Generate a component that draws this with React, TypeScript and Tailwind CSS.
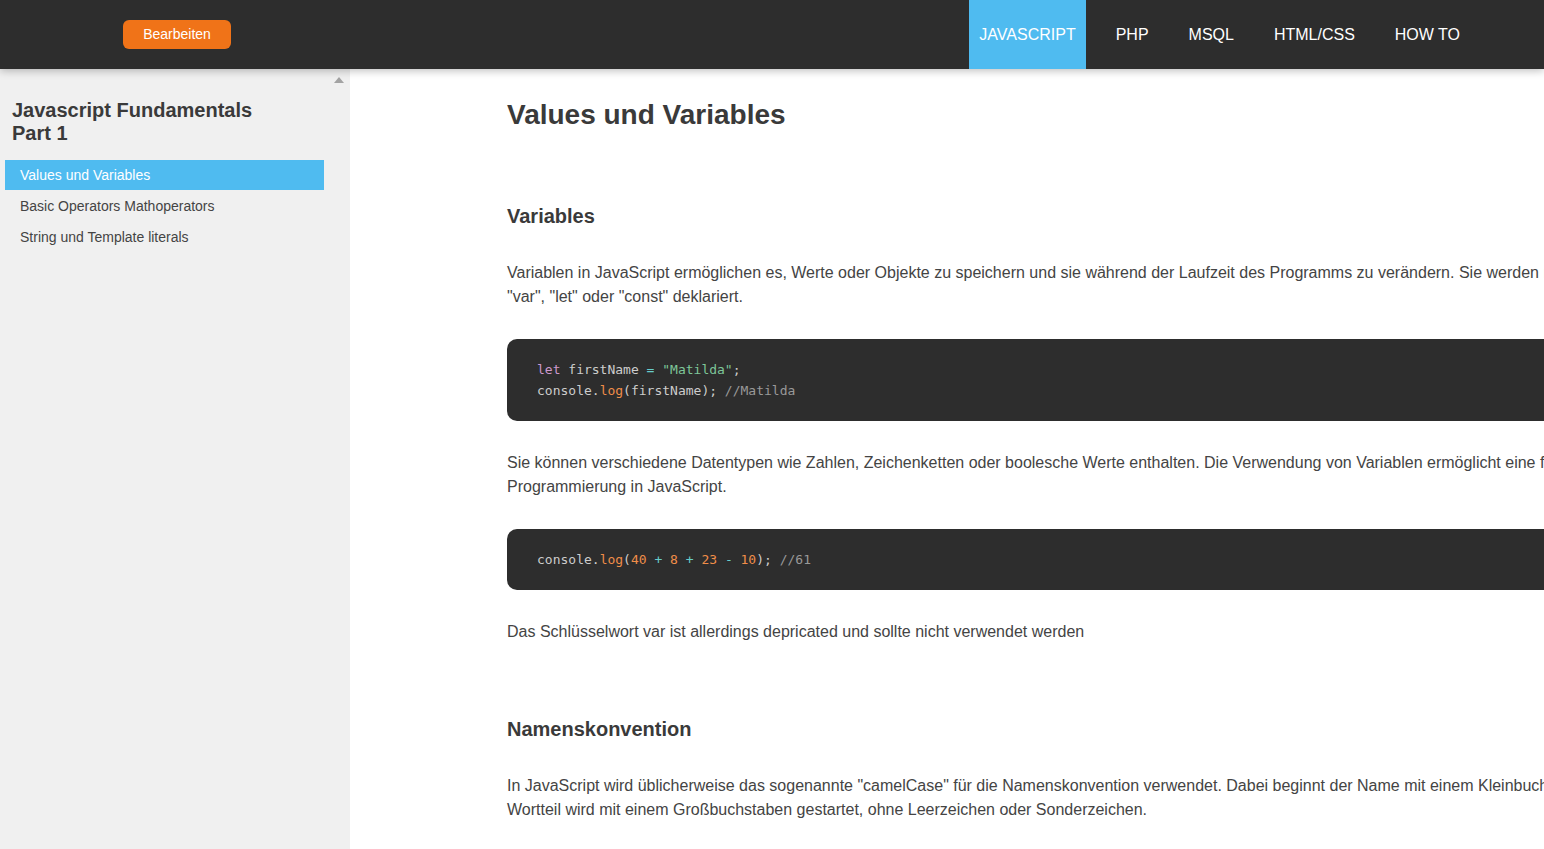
export default function App() {
  const navItems = ["JAVASCRIPT", "PHP", "MSQL", "HTML/CSS", "HOW TO"];
  const lessons = [
    "Values und Variables",
    "Basic Operators Mathoperators",
    "String und Template literals",
  ];

  return (
    <div className="w-[1544px] h-[849px] overflow-hidden flex flex-col bg-white font-['Liberation_Sans',Arial,sans-serif]">
      {/* top bar */}
      <header className="relative z-10 h-[69px] shrink-0 bg-[#2d2d2d] flex items-center justify-between pl-[123px] pr-[74px] shadow-[0_2px_8px_rgba(0,0,0,0.25)]">
        <button className="h-[29px] w-[108px] rounded-md bg-[#f07318] text-white text-[14px]">
          Bearbeiten
        </button>
        <nav className="flex h-full gap-5">
          {navItems.map((item, i) => (
            <a
              key={item}
              className={`h-full flex items-center px-[10px] text-[16px] text-white ${
                i === 0 ? "bg-[#4fbbf0]" : ""
              }`}
            >
              {item}
            </a>
          ))}
        </nav>
      </header>

      <div className="flex flex-1 min-h-0">
        {/* sidebar */}
        <aside className="relative w-[350px] shrink-0 bg-[#f0f0f0] pt-[30px]">
          <span className="absolute right-[6px] top-[8px] w-0 h-0 border-x-[5px] border-x-transparent border-b-[6px] border-b-[#a3a3a3]" />
          <h3 className="w-[280px] pl-3 text-[20px] leading-[23px] font-bold text-[#3a3a3a]">
            Javascript Fundamentals Part 1
          </h3>
          <ul className="mt-[15px] w-[319px] ml-[5px]">
            {lessons.map((l, i) => (
              <li
                key={l}
                className={`pl-[15px] flex items-center text-[14px] ${
                  i === 0 ? "bg-[#4fbbf0] text-white h-[30px]" : "text-[#444] h-[31px] pt-px"
                }`}
              >
                {l}
              </li>
            ))}
          </ul>
        </aside>

        {/* content */}
        <main className="flex-1 pl-[157px] pt-[29px]">
          <div className="w-[1230px] text-[#444] text-[16px] leading-6">
            <h1 className="text-[28px] leading-[34px] font-bold text-[#3a3a3a]">
              Values und Variables
            </h1>

            <h2 className="mt-[72px] text-[20px] leading-6 font-bold text-[#3a3a3a]">
              Variables
            </h2>
            <p className="mt-[33px]">
              Variablen in JavaScript ermöglichen es, Werte oder Objekte zu speichern und sie während der Laufzeit des Programms zu verändern. Sie werden mit den Schlüsselwörtern "var", "let" oder "const" deklariert.
            </p>

            <pre className="mt-[30px] rounded-[10px] bg-[#2d2d2d] px-[30px] py-5 text-[13px] leading-[21px] text-[#ccc] font-['DejaVu_Sans_Mono',monospace]">
              <span className="text-[#cc99cd]">let</span> firstName{" "}
              <span className="text-[#67cdcc]">=</span>{" "}
              <span className="text-[#7ec699]">"Matilda"</span>;{"\n"}
              console.<span className="text-[#f08d49]">log</span>(firstName);{" "}
              <span className="text-[#999]">//Matilda</span>
            </pre>

            <p className="mt-[30px]">
              Sie können verschiedene Datentypen wie Zahlen, Zeichenketten oder boolesche Werte enthalten. Die Verwendung von Variablen ermöglicht eine flexible und dynamische Programmierung in JavaScript.
            </p>

            <pre className="mt-[30px] rounded-[10px] bg-[#2d2d2d] px-[30px] py-5 text-[13px] leading-[21px] text-[#ccc] font-['DejaVu_Sans_Mono',monospace]">
              console.<span className="text-[#f08d49]">log</span>(
              <span className="text-[#f08d49]">40</span>{" "}
              <span className="text-[#67cdcc]">+</span>{" "}
              <span className="text-[#f08d49]">8</span>{" "}
              <span className="text-[#67cdcc]">+</span>{" "}
              <span className="text-[#f08d49]">23</span>{" "}
              <span className="text-[#67cdcc]">-</span>{" "}
              <span className="text-[#f08d49]">10</span>);{" "}
              <span className="text-[#999]">//61</span>
            </pre>

            <p className="mt-[30px]">
              Das Schlüsselwort var ist allerdings depricated und sollte nicht verwendet werden
            </p>

            <h2 className="mt-[73px] text-[20px] leading-6 font-bold text-[#3a3a3a]">
              Namenskonvention
            </h2>
            <p className="mt-[33px]">
              In JavaScript wird üblicherweise das sogenannte "camelCase" für die Namenskonvention verwendet. Dabei beginnt der Name mit einem Kleinbuchstaben und jeder weitere Wortteil wird mit einem Großbuchstaben gestartet, ohne Leerzeichen oder Sonderzeichen.
            </p>
          </div>
        </main>
      </div>
    </div>
  );
}
